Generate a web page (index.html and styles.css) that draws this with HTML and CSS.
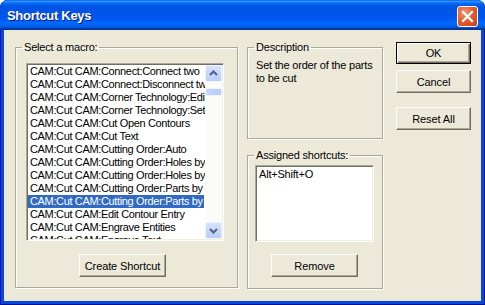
FILE: index.html
```html
<!DOCTYPE html>
<html>
<head>
<meta charset="utf-8">
<link rel="stylesheet" href="styles.css">
</head>
<body>
<div class="window">
  <div class="titlebar">
    <span class="title">Shortcut Keys</span>
    <span class="close"><svg width="13" height="13" viewBox="0 0 13 13"><path d="M2 2 L11 11 M11 2 L2 11" stroke="#fff" stroke-width="2.2" stroke-linecap="square"/></svg></span>
  </div>
  <div class="client">
    <fieldset class="group macro">
      <legend>Select a macro:</legend>
      <div class="group-body macro-body">
        <div class="listbox macro-list">
          <ul class="items">
            <li>CAM:Cut CAM:Connect:Connect two</li>
            <li>CAM:Cut CAM:Connect:Disconnect two</li>
            <li>CAM:Cut CAM:Corner Technology:Edit</li>
            <li>CAM:Cut CAM:Corner Technology:Set</li>
            <li>CAM:Cut CAM:Cut Open Contours</li>
            <li>CAM:Cut CAM:Cut Text</li>
            <li>CAM:Cut CAM:Cutting Order:Auto</li>
            <li>CAM:Cut CAM:Cutting Order:Holes by</li>
            <li>CAM:Cut CAM:Cutting Order:Holes by</li>
            <li>CAM:Cut CAM:Cutting Order:Parts by</li>
            <li class="sel">CAM:Cut CAM:Cutting Order:Parts by</li>
            <li>CAM:Cut CAM:Edit Contour Entry</li>
            <li>CAM:Cut CAM:Engrave Entities</li>
            <li>CAM:Cut CAM:Engrave Text</li>
          </ul>
          <div class="scrollbar">
            <span class="arrow"><svg width="15" height="15" viewBox="0 0 15 15"><path d="M4 9 L7.5 5.5 L11 9" fill="none" stroke="#4d6185" stroke-width="2"/></svg></span>
            <div class="track"><span class="thumb"></span></div>
            <span class="arrow"><svg width="15" height="15" viewBox="0 0 15 15"><path d="M4 6 L7.5 9.5 L11 6" fill="none" stroke="#4d6185" stroke-width="2"/></svg></span>
          </div>
        </div>
        <button class="btn create">Create Shortcut</button>
      </div>
    </fieldset>
    <div class="middle">
      <fieldset class="group desc">
        <legend>Description</legend>
        <div class="group-body desc-body">
          <p class="desc-text">Set the order of the parts<br>to be cut</p>
        </div>
      </fieldset>
      <fieldset class="group assigned">
        <legend>Assigned shortcuts:</legend>
        <div class="group-body assigned-body">
          <div class="listbox short-list"><div class="short-item">Alt+Shift+O</div></div>
          <button class="btn remove">Remove</button>
        </div>
      </fieldset>
    </div>
    <div class="buttons">
      <button class="btn default">OK</button>
      <button class="btn cancel">Cancel</button>
      <button class="btn reset">Reset All</button>
    </div>
  </div>
</div>
</body>
</html>
```
FILE: styles.css
```css
html, body {
  margin: 0;
  padding: 0;
  background: #ffffff;
}
.window {
  width: 485px;
  height: 305px;
  display: flex;
  flex-direction: column;
  background: #0a46dc;
  border-radius: 8px 8px 0 0;
  overflow: hidden;
  box-shadow: inset 1px 0 0 #0019a8, inset -1px 0 0 #001990, inset 0 -1px 0 #00138c;
  font-family: "Liberation Sans", Arial, sans-serif;
  font-size: 11px;
  color: #000;
}
.titlebar {
  height: 30px;
  flex: none;
  display: flex;
  align-items: center;
  justify-content: space-between;
  padding: 0 7px 0 7px;
  background: linear-gradient(to bottom, #0058ee 0%, #3593ff 4%, #288eff 6%, #127dff 8%, #036ffc 10%, #0262ee 14%, #0057e5 20%, #0054e3 24%, #0055eb 56%, #005bf5 66%, #026afe 76%, #0062ef 86%, #0052d6 92%, #0040ab 94%, #003092 100%);
}
.title {
  color: #fff;
  font-weight: bold;
  font-size: 13px;
  letter-spacing: -0.3px;
  text-shadow: 1px 1px 0 #0a1883;
  margin-top: 1px;
}
.close {
  width: 21px;
  height: 21px;
  box-sizing: border-box;
  border: 1px solid #fff;
  border-radius: 3px;
  background: radial-gradient(circle at 35% 30%, #f29a78 0%, #e35d32 45%, #c93c16 100%);
  display: flex;
  align-items: center;
  justify-content: center;
  margin-top: 2px;
}
.client {
  flex: 1;
  margin: 0 4px 4px 4px;
  background: #ece9d8;
  display: flex;
  padding: 11px 10px 0 11px;
  gap: 9px;
}
.group {
  margin: 0;
  padding: 0;
  border: 1px solid #aca899;
  box-shadow: inset 1px 1px 0 #fff, 1px 1px 0 #fff;
  box-sizing: border-box;
  min-width: 0;
}
.group legend {
  padding: 0 2px;
  margin-left: 6px;
  line-height: 13px;
  letter-spacing: -0.2px;
}
.group-body {
  display: flex;
  flex-direction: column;
  align-items: flex-start;
}
.macro {
  width: 223px;
  height: 247px;
  flex: none;
}
.macro-body {
  padding: 9px 0 0 10px;
}
.listbox {
  box-sizing: border-box;
  background: #fff;
  border: 1px solid;
  border-color: #aca899 #fff #fff #aca899;
  box-shadow: inset 1px 1px 0 #716f64, inset -1px -1px 0 #f1efe2;
  overflow: hidden;
}
.macro-list {
  width: 198px;
  height: 178px;
  padding: 1px;
  display: flex;
}
.items {
  list-style: none;
  margin: 0;
  padding: 0;
  flex: 1;
  min-width: 0;
  overflow: hidden;
}
.items li {
  height: 13px;
  line-height: 13px;
  padding-left: 2px;
  white-space: nowrap;
  overflow: hidden;
  letter-spacing: -0.35px;
}
.items li.sel {
  background: #316ac5;
  color: #fff;
  margin-right: 1px;
}
.scrollbar {
  width: 17px;
  flex: none;
  display: flex;
  flex-direction: column;
  background: #fbfbf8;
}
.arrow {
  width: 17px;
  height: 17px;
  box-sizing: border-box;
  border: 1px solid #eef3fe;
  border-radius: 2px;
  background: linear-gradient(to bottom, #d6e2fd, #b8cdf8);
  display: flex;
  align-items: center;
  justify-content: center;
}
.track {
  flex: 1;
  padding-top: 6px;
}
.thumb {
  display: block;
  height: 8px;
  box-sizing: border-box;
  border: 1px solid #eef3fe;
  border-radius: 2px;
  background: linear-gradient(to right, #c9d8fc, #b6cbf8);
}
.btn {
  font-family: "Liberation Sans", Arial, sans-serif;
  font-size: 11px;
  color: #000;
  background: #ece9d8;
  border: 1px solid;
  border-color: #fff #716f64 #716f64 #fff;
  box-shadow: inset -1px -1px 0 #aca899;
  padding: 0;
  box-sizing: border-box;
  height: 23px;
  letter-spacing: -0.1px;
}
.create {
  width: 87px;
  margin: 13px 0 0 53px;
}
.middle {
  width: 136px;
  flex: none;
  display: flex;
  flex-direction: column;
  gap: 10px;
  margin-right: 4px;
}
.desc {
  height: 98px;
}
.desc-body {
  padding: 5px 0 0 8px;
}
.desc-text {
  margin: 0;
  line-height: 13px;
  letter-spacing: -0.2px;
}
.assigned {
  height: 140px;
}
.assigned-body {
  padding: 3px 0 0 7px;
}
.short-list {
  width: 119px;
  height: 77px;
  padding: 2px 3px;
}
.short-item {
  line-height: 13px;
  letter-spacing: -0.2px;
}
.remove {
  width: 87px;
  margin: 12px 0 0 16px;
}
.buttons {
  width: 75px;
  flex: none;
  display: flex;
  flex-direction: column;
}
.default {
  width: 75px;
  margin-top: 1px;
  height: 22px;
  border: 1px solid #000;
  box-shadow: inset 1px 1px 0 #fff, inset -1px -1px 0 #716f64, inset -2px -2px 0 #aca899;
}
.cancel {
  width: 75px;
  margin-top: 6px;
}
.reset {
  width: 75px;
  margin-top: 14px;
}
```
